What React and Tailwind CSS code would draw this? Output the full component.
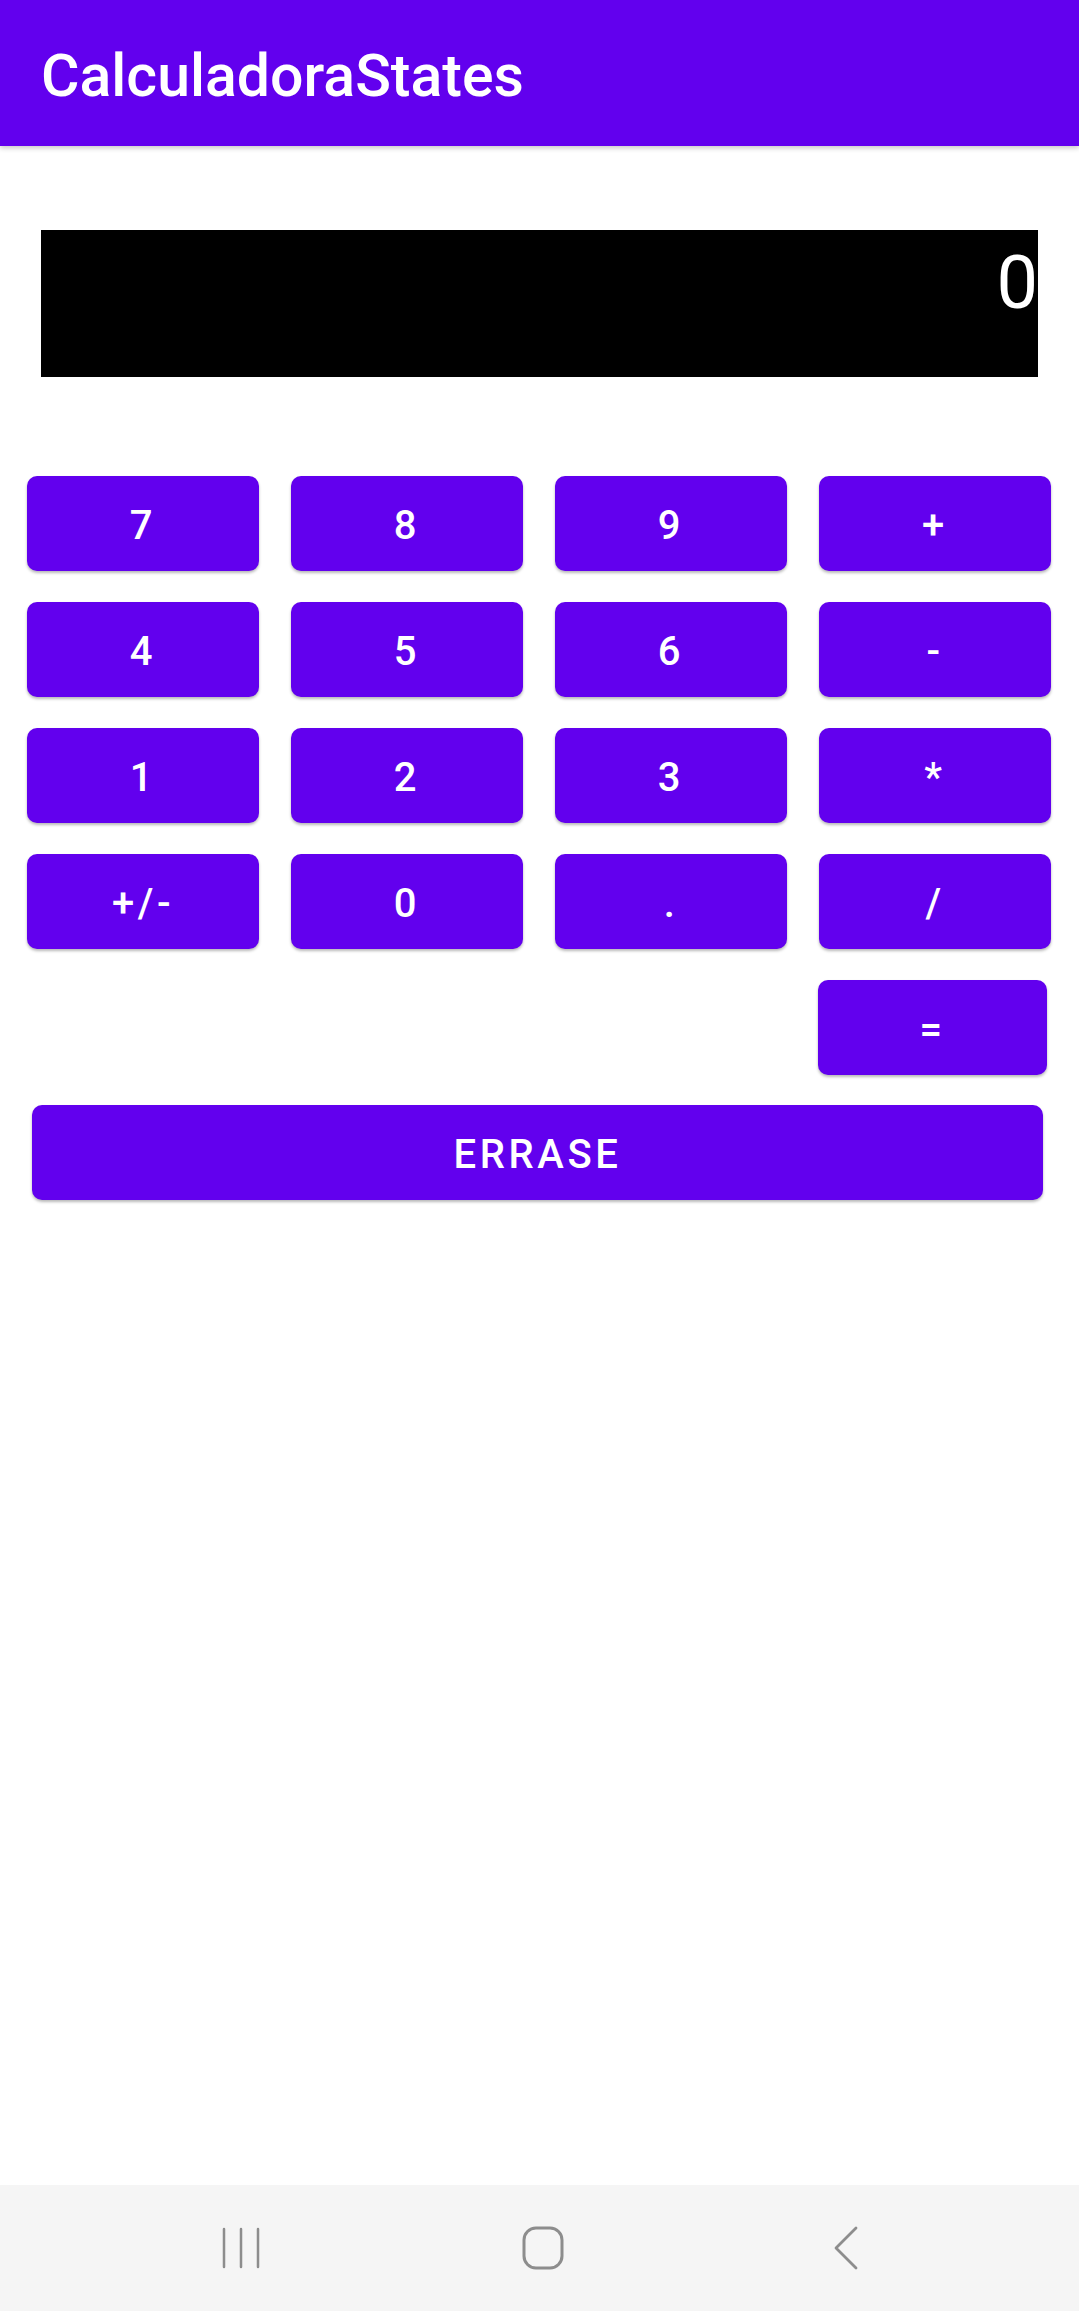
const keys = [
  ["7", "8", "9", "+"],
  ["4", "5", "6", "-"],
  ["1", "2", "3", "*"],
  ["+/-", "0", ".", "/"],
]

function Key({ label, className = "" }) {
  return (
    <button
      className={
        "h-[95px] rounded-[10px] bg-[#6200ee] text-white text-[40px] font-medium tracking-[0.09em] shadow-[0_2px_3px_rgba(0,0,0,0.28)] flex items-center justify-center leading-none pt-[5px] " +
        className
      }
    >
      {label}
    </button>
  )
}

export default function App() {
  return (
    <div className="min-h-[2311px] h-[2311px] flex flex-col bg-white font-['Roboto',sans-serif]">
      <header className="h-[146px] shrink-0 bg-[#6200ee] flex items-center px-[41px] pt-[4px] shadow-[0_2px_5px_rgba(0,0,0,0.22)] z-10">
        <h1 className="text-white text-[59px] font-medium leading-none">CalculadoraStates</h1>
      </header>

      <div className="mt-[84px] mx-[41px] h-[147px] bg-black flex justify-end items-start">
        <span className="text-white text-[74px] leading-none pt-[16px]">0</span>
      </div>

      <div className="mt-[99px] pl-[27px] pr-[28px] grid grid-cols-4 gap-x-[32px] gap-y-[31px]">
        {keys.flat().map((k) => (
          <Key key={k} label={k} />
        ))}
      </div>

      <div className="mt-[31px] flex justify-end pr-[32px]">
        <Key label="=" className="w-[229px]" />
      </div>

      <div className="mt-[30px] pl-[32px] pr-[36px]">
        <Key label="ERRASE" className="w-full" />
      </div>

      <nav className="mt-auto h-[126px] bg-[#f5f5f5] flex items-center">
        <div className="w-full h-[42px] relative flex items-center">
          <svg className="absolute left-[220px]" width="42" height="42" viewBox="0 0 42 42" fill="none" stroke="#8d8d8d" strokeWidth="2.5" strokeLinecap="round">
            <path d="M4 2v38M21 2v38M38 2v38" />
          </svg>
          <svg className="absolute left-[521px]" width="44" height="44" viewBox="0 0 44 44" fill="none" stroke="#8d8d8d" strokeWidth="3">
            <rect x="3" y="2" width="38" height="40" rx="12" />
          </svg>
          <svg className="absolute left-[832px]" width="28" height="44" viewBox="0 0 28 44" fill="none" stroke="#8d8d8d" strokeWidth="2.8" strokeLinecap="round" strokeLinejoin="round">
            <path d="M24 2L4 22l20 20" />
          </svg>
        </div>
      </nav>
    </div>
  )
}
